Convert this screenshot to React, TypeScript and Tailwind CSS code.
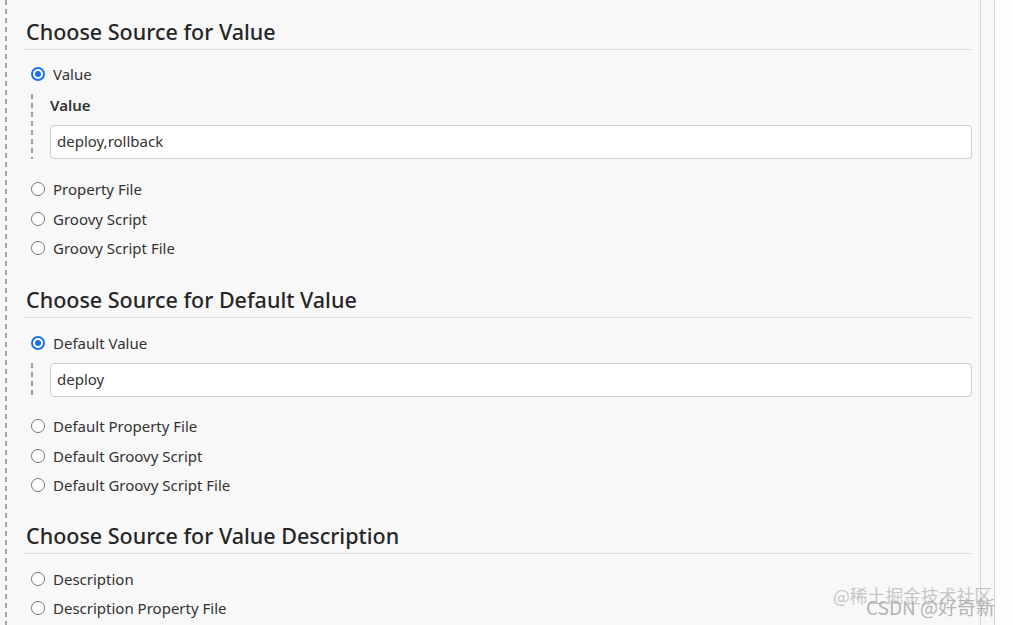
import React from "react";

const font = { fontFamily: '"Noto Sans", "Open Sans", "Liberation Sans", sans-serif' };

function Radio({ checked, label }: { checked?: boolean; label: string }) {
  return (
    <label className="flex h-[29.5px] items-center pl-[7px] text-[15px] text-[#333]">
      {checked ? (
        <span className="flex h-[14px] w-[14px] items-center justify-center rounded-full border-2 border-[#1a73e8] bg-white">
          <span className="h-[6px] w-[6px] rounded-full bg-[#1a73e8]" />
        </span>
      ) : (
        <span className="h-[14px] w-[14px] rounded-full border border-[#767676] bg-white" />
      )}
      <span className="ml-[8px] leading-[22px]">{label}</span>
    </label>
  );
}

function Heading({ children, top }: { children: React.ReactNode; top: string }) {
  return (
    <div className={`${top} border-b border-[#e2e2e2] pb-[3px] pl-[2px] text-[21.5px] font-medium leading-[28px] text-[#262626]`}>
      {children}
    </div>
  );
}

function TextField({ value }: { value: string }) {
  return (
    <div className="flex h-[34px] items-center rounded-[4px] border border-[#cfcfcf] bg-white pl-[6px] text-[15px] text-[#333]">
      {value}
    </div>
  );
}

function Nested({ className, children }: { className: string; children: React.ReactNode }) {
  return (
    <div className={`ml-[7px] flex ${className}`}>
      <div className="w-[2px] shrink-0 bg-[repeating-linear-gradient(to_bottom,#a0a0a0_0px,#a0a0a0_5px,transparent_5px,transparent_9px)]" />
      <div className="flex-1 pl-[17px]">{children}</div>
    </div>
  );
}

export default function App() {
  return (
    <div className="relative flex h-[625px] w-[1013px] overflow-hidden bg-[#f8f8f8]" style={font}>
      {/* outer dashed guide */}
      <div className="ml-[5px] h-full w-[2px] bg-[repeating-linear-gradient(to_bottom,#a8a8a8_0px,#a8a8a8_5px,transparent_5px,transparent_9px)]" />

      <div className="ml-[17px] w-[948px]">
        {/* Value */}
        <Heading top="mt-[18px]">Choose Source for Value</Heading>
        <div className="mt-[9px]">
          <Radio checked label="Value" />
          <Nested className="mt-[3px] pb-[1px] pt-[2px]">
            <div className="text-[15px] font-semibold leading-[22px] text-[#333]">Value</div>
            <div className="mt-[9px]">
              <TextField value="deploy,rollback" />
            </div>
          </Nested>
          <div className="mt-[15px]">
            <Radio label="Property File" />
            <Radio label="Groovy Script" />
            <Radio label="Groovy Script File" />
          </div>
        </div>

        {/* Default value */}
        <Heading top="mt-[23px]">Choose Source for Default Value</Heading>
        <div className="mt-[10px]">
          <Radio checked label="Default Value" />
          <Nested className="mt-[3px] pb-[2px] pt-[2px]">
            <TextField value="deploy" />
          </Nested>
          <div className="mt-[13px]">
            <Radio label="Default Property File" />
            <Radio label="Default Groovy Script" />
            <Radio label="Default Groovy Script File" />
          </div>
        </div>

        {/* Value description */}
        <Heading top="mt-[22px]">Choose Source for Value Description</Heading>
        <div className="mt-[10px]">
          <Radio label="Description" />
          <Radio label="Description Property File" />
        </div>
      </div>

      {/* right gutter */}
      <div className="ml-[8px] h-full w-[15px] border-x border-[#d4d4d4] bg-[#f8f8f8]" />
      <div className="h-full flex-1 bg-[#fdfdfd]" />

      {/* watermark */}
      <div
        className="pointer-events-none absolute left-[833px] top-[585px] text-[17.8px] leading-[20px] text-[#c6c6c6]"
        style={{ fontFamily: '"Noto Sans CJK SC", "Noto Sans", sans-serif' }}
      >
        @稀土掘金技术社区
      </div>
      <div
        className="pointer-events-none absolute left-[866px] top-[597px] text-[19px] leading-[20px] text-[#b4b4b4]"
        style={{ fontFamily: '"Noto Sans CJK SC", "Noto Sans", sans-serif' }}
      >
        CSDN @好奇新
      </div>
    </div>
  );
}
